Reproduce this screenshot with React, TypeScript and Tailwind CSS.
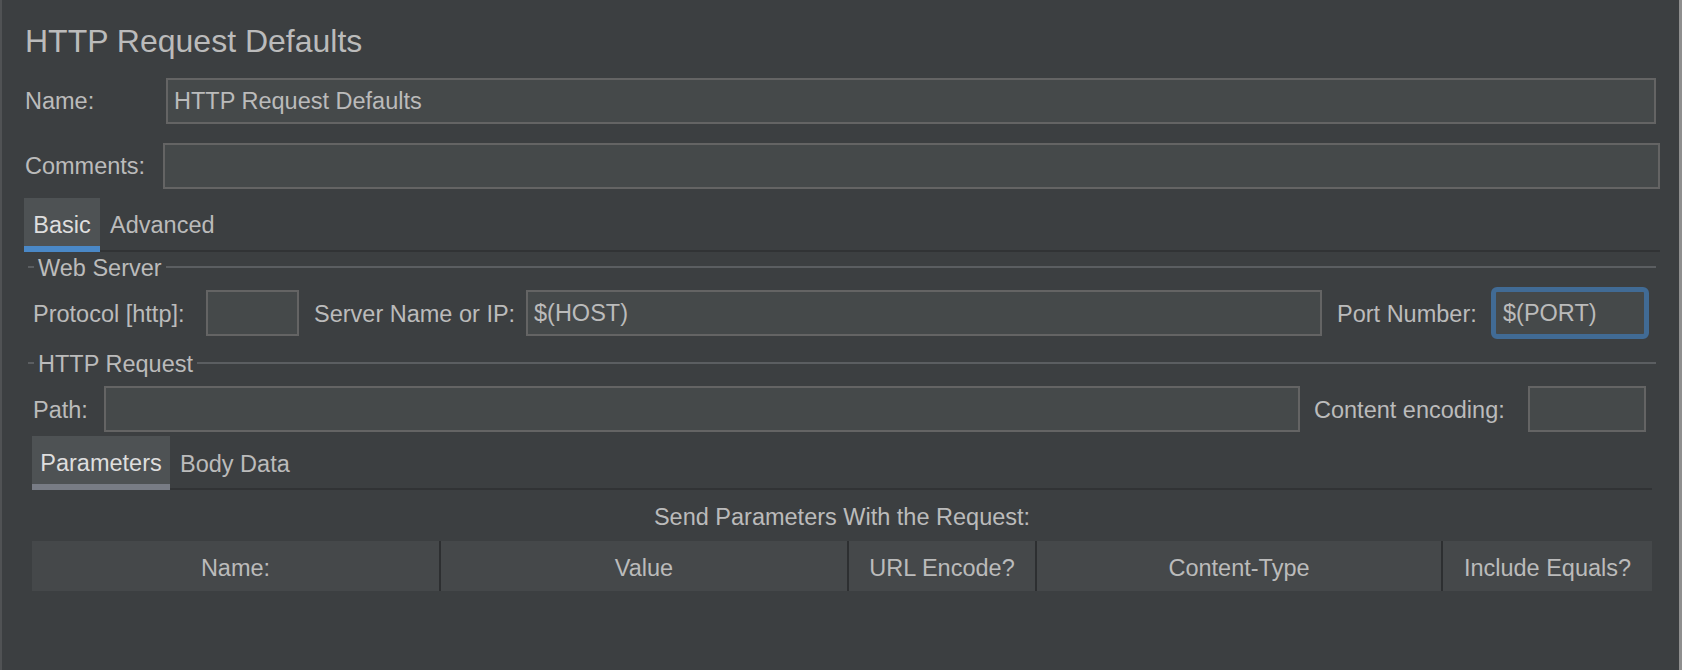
import React from 'react';

const font = "font-['Liberation_Sans',Arial,sans-serif]";

const Input = ({ value = '', className = '' }: { value?: string; className?: string }) => (
  <div
    className={`h-[46px] border-2 border-[#646464] bg-[#45494a] pl-[6px] pt-[2px] flex items-center text-[#bbbbbb] whitespace-nowrap overflow-hidden ${className}`}
  >
    {value}
  </div>
);

const Legend = ({ title }: { title: string }) => (
  <div className="flex items-center h-[24px]">
    <div className="w-[6px] h-[2px] bg-[#5b5e61]" />
    <span className="ml-[4px] mr-[4px] leading-none pt-[4px]">{title}</span>
    <div className="flex-1 h-[2px] bg-[#5b5e61]" />
  </div>
);

const columns = ['Name:', 'Value', 'URL Encode?', 'Content-Type', 'Include Equals?'];

export default function App() {
  return (
    <div
      className={`${font} w-full h-[670px] bg-[#3c3f41] text-[#bbbbbb] text-[23.5px] border-l-2 border-l-[#505254] border-r-[3px] border-r-[#8e8e8e] pl-[22px] pr-[19px] overflow-hidden`}
    >
      {/* Title */}
      <div className="pt-[26px] h-[78px]">
        <div className="text-[32px] leading-[31px] ml-px">HTTP Request Defaults</div>
      </div>

      {/* Name */}
      <div className="flex items-center h-[45px]">
        <span className="w-[142px] pl-px pt-[3px]">Name:</span>
        <Input value="HTTP Request Defaults" className="flex-1 h-[45px] mr-[4px]" />
      </div>

      {/* Comments */}
      <div className="flex items-center h-[45px] mt-[20px]">
        <span className="w-[139px] pl-px pt-[3px]">Comments:</span>
        <Input className="flex-1 h-[45px]" />
      </div>

      {/* Basic / Advanced tabs */}
      <div className="flex items-end h-[54px] mt-[10px] border-b-2 border-[#313335]">
        <div className="-mb-[2px] flex flex-col w-[76px]">
          <div className="h-[48px] bg-[#4e5254] flex items-center justify-center pt-[8px] text-[#dedede]">Basic</div>
          <div className="h-[6px] bg-[#4a88c7]" />
        </div>
        <div className="h-[52px] flex items-center pl-[10px] pt-[4px]">Advanced</div>
      </div>

      {/* Web Server */}
      <div className="mx-[4px] mt-[3px]">
        <Legend title="Web Server" />
        <div className="flex items-center h-[52px] mt-[8px] pl-[5px] pr-[7px]">
          <span className="w-[159px] whitespace-nowrap pt-[3px]">Protocol [http]:</span>
          <Input className="w-[93px] ml-[14px]" />
          <span className="ml-[15px] w-[198px] whitespace-nowrap pt-[3px]">Server Name or IP:</span>
          <Input value="$(HOST)" className="flex-1 ml-[14px]" />
          <span className="ml-[15px] w-[143px] whitespace-nowrap pt-[3px]">Port Number:</span>
          <div className="ml-[11px] w-[158px] h-[52px] rounded-[6px] border-[5px] border-[#416b95] bg-[#45494a] flex items-center pl-[7px] pt-[2px] whitespace-nowrap">
            $(PORT)
          </div>
        </div>

        {/* HTTP Request */}
        <div className="mt-[12px]">
          <Legend title="HTTP Request" />
        </div>
        <div className="flex items-center h-[46px] mt-[11px] pl-[5px] pr-[10px]">
          <span className="pt-[3px]">Path:</span>
          <Input className="flex-1 ml-[16px]" />
          <span className="ml-[14px] w-[199px] whitespace-nowrap pt-[3px]">Content encoding:</span>
          <Input className="w-[118px] ml-[15px]" />
        </div>

        {/* Parameters / Body Data tabs */}
        <div className="mx-[4px] mt-[4px]">
          <div className="flex items-end h-[54px] border-b-2 border-[#313335]">
            <div className="-mb-[2px] flex flex-col w-[138px]">
              <div className="h-[48px] bg-[#4e5254] flex items-center justify-center pt-[8px] text-[#dedede]">Parameters</div>
              <div className="h-[6px] bg-[#787c85]" />
            </div>
            <div className="h-[52px] flex items-center pl-[10px] pt-[6px]">Body Data</div>
          </div>

          <div className="h-[50px] flex items-center justify-center pt-[6px]">Send Parameters With the Request:</div>

          <div className="grid grid-cols-[407px_408px_188px_406px_1fr] h-[50px] mt-[1px] bg-[#45484a]">
            {columns.map((c, i) => (
              <div
                key={c}
                className={`flex items-center justify-center whitespace-nowrap pt-[5px] ${i > 0 ? 'border-l-2 border-[#2d2f31]' : ''}`}
              >
                {c}
              </div>
            ))}
          </div>
        </div>
      </div>
    </div>
  );
}
